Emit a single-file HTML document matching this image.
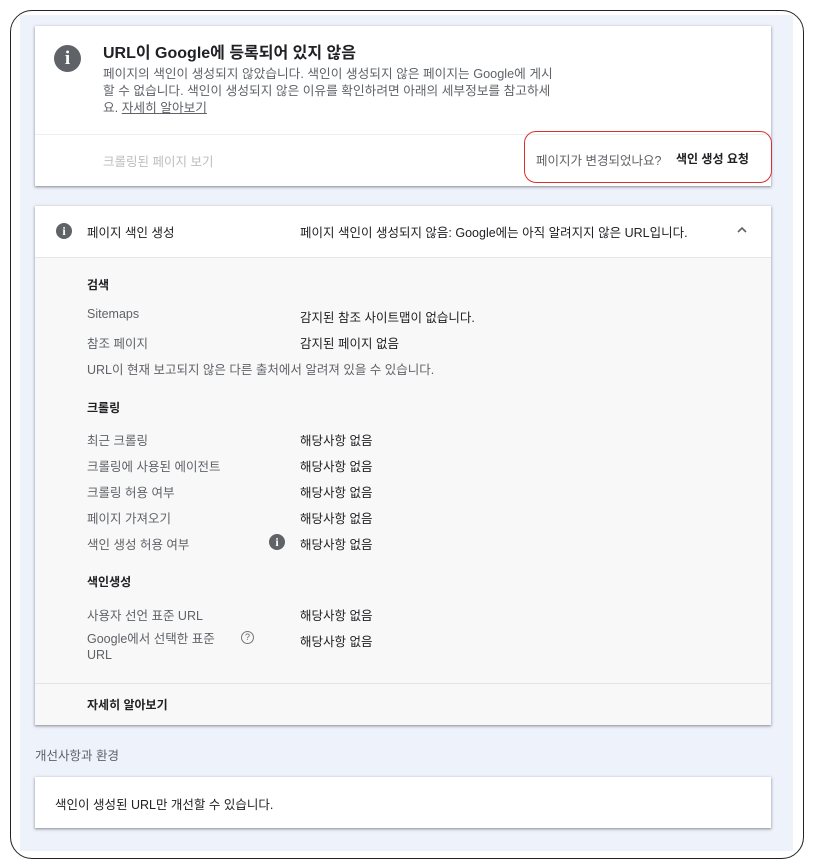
<!DOCTYPE html>
<html><head><meta charset="utf-8"><style>
*{margin:0;padding:0;box-sizing:border-box}
body{width:813px;height:868px;background:#fff;position:relative;overflow:hidden;font-family:"Liberation Sans","Noto Sans CJK KR",sans-serif;color:#202124}
.frame{position:absolute;left:10px;top:10px;width:794px;height:849px;border:1.5px solid #222;border-radius:22px;overflow:hidden}
.bg{position:absolute;left:20px;top:15px;width:773px;height:836px;background:#eef2fb}
.card{position:absolute;background:#fff;box-shadow:0 1px 2px rgba(0,0,0,.3),0 1px 3px 1px rgba(0,0,0,.12)}
.a{position:absolute;white-space:nowrap}
.g{color:#5f6368}
.f13{font-size:12.5px}
.b{font-weight:bold}
.ic{position:absolute;border-radius:50%;background:#5f6368;color:#fff;text-align:center;font-weight:bold;font-family:"Liberation Serif",serif}
</style></head><body>
<div class="frame"></div>
<div class="bg"></div>

<div class="card" style="left:35px;top:26px;width:736px;height:160px">
  <div class="ic" style="left:19px;top:19px;width:27px;height:27px;font-size:19px;line-height:27px">i</div>
  <div class="a" style="left:68px;top:13px;font-size:16px;font-weight:bold;color:#202124">URL이 Google에 등록되어 있지 않음</div>
  <div class="a g" style="left:68px;top:40px;font-size:12.7px;line-height:17px">페이지의 색인이 생성되지 않았습니다. 색인이 생성되지 않은 페이지는 Google에 게시<br>할 수 없습니다. 색인이 생성되지 않은 이유를 확인하려면 아래의 세부정보를 참고하세<br>요. <span style="text-decoration:underline">자세히 알아보기</span></div>
  <div style="position:absolute;left:0;top:108px;width:736px;height:1px;background:#eee"></div>
  <div class="a f13" style="left:68px;top:125px;color:#bdbdbd">크롤링된 페이지 보기</div>
  <div style="position:absolute;left:489px;top:105px;width:248px;height:52px;border:1px solid #d93030;border-radius:12px"></div>
  <div class="a f13 g" style="left:501px;top:124px">페이지가 변경되었나요?</div>
  <div class="a f13 b" style="left:641px;top:124px;font-size:12px">색인 생성 요청</div>
</div>

<div class="card" style="left:35px;top:206px;width:736px;height:519px">
  <div class="ic" style="left:21px;top:17px;width:16px;height:16px;font-size:12px;line-height:16px">i</div>
  <div class="a f13" style="left:52px;top:16px">페이지 색인 생성</div>
  <div class="a f13" style="left:265px;top:16px">페이지 색인이 생성되지 않음: Google에는 아직 알려지지 않은 URL입니다.</div>
  <svg style="position:absolute;left:701px;top:20px" width="12" height="8" viewBox="0 0 12 8"><path d="M2 6 L6 2 L10 6" fill="none" stroke="#5f6368" stroke-width="1.6"/></svg>
  <div style="position:absolute;left:0;top:51px;width:736px;height:468px;background:#f8f8f8;border-top:1px solid #e6e6e6"></div>
  <div class="a b" style="left:52px;top:70px;font-size:12px">검색</div>
  <div class="a f13 g" style="left:52px;top:101px">Sitemaps</div><div class="a f13" style="left:265px;top:101px">감지된 참조 사이트맵이 없습니다.</div>
  <div class="a f13 g" style="left:52px;top:127px">참조 페이지</div><div class="a f13" style="left:265px;top:127px">감지된 페이지 없음</div>
  <div class="a f13 g" style="left:52px;top:153px">URL이 현재 보고되지 않은 다른 출처에서 알려져 있을 수 있습니다.</div>
  <div class="a b" style="left:52px;top:193px;font-size:12px">크롤링</div>
  <div class="a f13 g" style="left:52px;top:224px">최근 크롤링</div><div class="a f13" style="left:265px;top:224px">해당사항 없음</div>
  <div class="a f13 g" style="left:52px;top:250px">크롤링에 사용된 에이전트</div><div class="a f13" style="left:265px;top:250px">해당사항 없음</div>
  <div class="a f13 g" style="left:52px;top:276px">크롤링 허용 여부</div><div class="a f13" style="left:265px;top:276px">해당사항 없음</div>
  <div class="a f13 g" style="left:52px;top:302px">페이지 가져오기</div><div class="a f13" style="left:265px;top:302px">해당사항 없음</div>
  <div class="a f13 g" style="left:52px;top:328px">색인 생성 허용 여부</div>
  <div class="ic" style="left:234px;top:328px;width:16px;height:16px;font-size:12px;line-height:16px">i</div>
  <div class="a f13" style="left:265px;top:328px">해당사항 없음</div>
  <div class="a b" style="left:52px;top:367px;font-size:12px">색인생성</div>
  <div class="a f13 g" style="left:52px;top:399px">사용자 선언 표준 URL</div><div class="a f13" style="left:265px;top:399px">해당사항 없음</div>
  <div class="a f13 g" style="left:52px;top:425px;line-height:16px">Google에서 선택한 표준<br>URL</div>
  <div class="a g" style="left:206px;top:425px;width:13px;height:13px;border:1px solid #777;border-radius:50%;font-size:9px;line-height:11px;text-align:center">?</div>
  <div class="a f13" style="left:265px;top:425px">해당사항 없음</div>
  <div style="position:absolute;left:0;top:477px;width:736px;height:1px;background:#e4e4e4"></div>
  <div class="a b" style="left:52px;top:490px;font-size:12px">자세히 알아보기</div>
</div>

<div class="a f13 g" style="left:35px;top:745px">개선사항과 환경</div>

<div class="card" style="left:35px;top:777px;width:736px;height:51px">
  <div class="a f13" style="left:20px;top:17px">색인이 생성된 URL만 개선할 수 있습니다.</div>
</div>
</body></html>
